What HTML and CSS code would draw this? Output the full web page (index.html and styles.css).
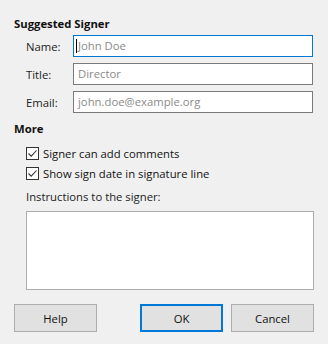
FILE: index.html
```html
<!DOCTYPE html>
<html lang="en">
<head>
  <meta charset="UTF-8">
  <title>Suggested Signer</title>
  <link rel="stylesheet" href="styles.css">
</head>
<body>
  <div class="dialog">
    <h2 class="section-title">Suggested Signer</h2>
    <div class="fields">
      <label class="field-label" for="name">Name:</label>
      <div class="input focused" id="name"><span class="caret"></span>John Doe</div>
      <label class="field-label" for="title">Title:</label>
      <div class="input" id="title">Director</div>
      <label class="field-label" for="email">Email:</label>
      <div class="input" id="email">john.doe@example.org</div>
    </div>

    <h2 class="section-title more">More</h2>
    <div class="options">
      <div class="check-row">
        <span class="checkbox">
          <svg width="11" height="11" viewBox="0 0 11 11"><path d="M1.5 5.5 L4.2 8.2 L9.5 2.5" fill="none" stroke="#333" stroke-width="1.1"/></svg>
        </span>
        <span>Signer can add comments</span>
      </div>
      <div class="check-row">
        <span class="checkbox">
          <svg width="11" height="11" viewBox="0 0 11 11"><path d="M1.5 5.5 L4.2 8.2 L9.5 2.5" fill="none" stroke="#333" stroke-width="1.1"/></svg>
        </span>
        <span>Show sign date in signature line</span>
      </div>
      <div class="instructions-label">Instructions to the signer:</div>
      <div class="textarea"></div>
    </div>

    <div class="buttons">
      <button class="btn">Help</button>
      <div class="btn-group">
        <button class="btn default">OK</button>
        <button class="btn">Cancel</button>
      </div>
    </div>
  </div>
</body>
</html>
```

FILE: styles.css
```css
* {
  margin: 0;
  padding: 0;
  box-sizing: border-box;
}

body {
  width: 328px;
  height: 344px;
  background: #f0f0f0;
  font-family: 'Open Sans', 'Noto Sans', sans-serif;
  font-size: 11.3px;
  color: #1a1a1a;
  overflow: hidden;
}

.dialog {
  padding: 16px 14px 0 14px;
}

.section-title {
  font-size: 11.3px;
  font-weight: 700;
  line-height: 16px;
  color: #111;
}

.fields {
  display: grid;
  grid-template-columns: 47px 240px;
  row-gap: 6px;
  margin: 3px 0 0 12px;
  align-items: center;
}

.field-label {
  color: #222;
}

.input {
  height: 22px;
  border: 1px solid #7a7a7a;
  background: #fff;
  color: #8a8a8a;
  padding: 0 4px;
  line-height: 20px;
  position: relative;
}

.input.focused {
  border-color: #0078d7;
}

.caret {
  position: absolute;
  left: 2px;
  top: 3px;
  width: 1px;
  height: 14px;
  background: #000;
}

.more {
  margin-top: 8px;
}

.options {
  margin: 6px 0 0 12px;
}

.check-row {
  display: flex;
  align-items: center;
  gap: 4px;
  height: 20px;
  color: #111;
}

.checkbox {
  width: 13px;
  height: 13px;
  border: 1px solid #333;
  background: #fff;
  display: flex;
  align-items: center;
  justify-content: center;
}

.instructions-label {
  margin-top: 6px;
  line-height: 16px;
  color: #222;
}

.textarea {
  margin-top: 6px;
  height: 79px;
  border: 1px solid #adadad;
  background: #fff;
}

.buttons {
  display: flex;
  justify-content: space-between;
  margin-top: 14px;
}

.btn-group {
  display: flex;
  gap: 8px;
}

.btn {
  width: 83px;
  height: 28px;
  border: 1px solid #adadad;
  background: #e1e1e1;
  font-family: inherit;
  font-size: 11.3px;
  color: #111;
}

.btn.default {
  border: 2px solid #0078d7;
}
```
